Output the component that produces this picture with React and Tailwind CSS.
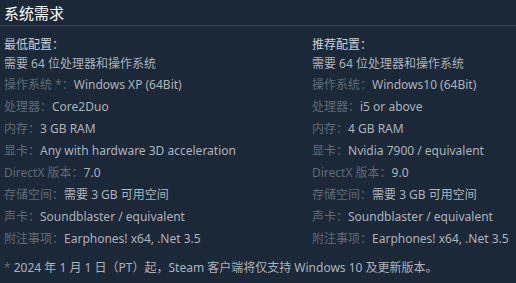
import React from 'react'

const minimum = {
  title: '最低配置：',
  note: '需要 64 位处理器和操作系统',
  rows: [
    ['操作系统 *：', 'Windows XP (64Bit)'],
    ['处理器：', 'Core2Duo'],
    ['内存：', '3 GB RAM'],
    ['显卡：', 'Any with hardware 3D acceleration'],
    ['DirectX 版本：', '7.0'],
    ['存储空间：', '需要 3 GB 可用空间'],
    ['声卡：', 'Soundblaster / equivalent'],
    ['附注事项：', 'Earphones! x64, .Net 3.5'],
  ],
}

const recommended = {
  title: '推荐配置：',
  note: '需要 64 位处理器和操作系统',
  rows: [
    ['操作系统：', 'Windows10 (64Bit)'],
    ['处理器：', 'i5 or above'],
    ['内存：', '4 GB RAM'],
    ['显卡：', 'Nvidia 7900 / equivalent'],
    ['DirectX 版本：', '9.0'],
    ['存储空间：', '需要 3 GB 可用空间'],
    ['声卡：', 'Soundblaster / equivalent'],
    ['附注事项：', 'Earphones! x64, .Net 3.5'],
  ],
}

function ReqColumn({ data }) {
  return (
    <div>
      <div className="leading-[18px] text-[#c6d0d8]">{data.title}</div>
      <div className="leading-[20px]">{data.note}</div>
      {data.rows.map(([label, value]) => (
        <div key={label} className="leading-[22px] whitespace-nowrap">
          <span className="text-[#5f6b77]">{label}</span>
          {value}
        </div>
      ))}
    </div>
  )
}

export default function App() {
  return (
    <div
      className="w-[516px] h-[283px] bg-[#1b2838] text-[#acb2b8] text-[12px] overflow-hidden"
      style={{ fontFamily: '"Noto Sans", "Noto Sans CJK SC", sans-serif' }}
    >
      <h2 className="h-[26px] leading-[26px] pl-[4px] text-[15px] text-white border-b border-[#2e475e]">
        系统需求
      </h2>

      <div className="pl-[4px] pt-[10px]">
        <div className="grid grid-cols-[308px_1fr]">
          <ReqColumn data={minimum} />
          <ReqColumn data={recommended} />
        </div>

        <p className="mt-[8px] leading-[20px]">
          <span className="text-[#5f6b77]">*</span> 2024 年 1 月 1 日（PT）起，Steam 客户端将仅支持 Windows 10 及更新版本。
        </p>
      </div>
    </div>
  )
}
